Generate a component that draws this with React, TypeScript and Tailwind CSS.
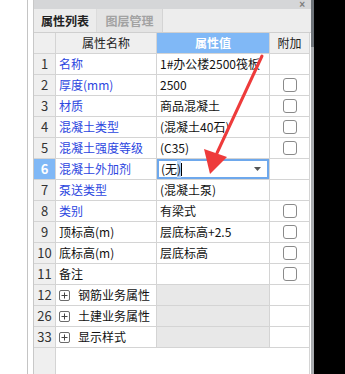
import React from "react";

type Row = {
  idx: string;
  name: string;
  value?: string;
  blue?: boolean;
  check?: boolean;
  group?: boolean;
  active?: boolean;
};

const rows: Row[] = [
  { idx: "1", name: "名称", value: "1#办公楼2500筏板", blue: true },
  { idx: "2", name: "厚度(mm)", value: "2500", blue: true, check: true },
  { idx: "3", name: "材质", value: "商品混凝土", blue: true, check: true },
  { idx: "4", name: "混凝土类型", value: "(混凝土40石)", blue: true, check: true },
  { idx: "5", name: "混凝土强度等级", value: "(C35)", blue: true, check: true },
  { idx: "6", name: "混凝土外加剂", value: "(无)", blue: true, active: true },
  { idx: "7", name: "泵送类型", value: "(混凝土泵)", blue: true },
  { idx: "8", name: "类别", value: "有梁式", blue: true, check: true },
  { idx: "9", name: "顶标高(m)", value: "层底标高+2.5", check: true },
  { idx: "10", name: "底标高(m)", value: "层底标高", check: true },
  { idx: "11", name: "备注", value: "", check: true },
  { idx: "12", name: "钢筋业务属性", group: true },
  { idx: "26", name: "土建业务属性", group: true },
  { idx: "33", name: "显示样式", group: true },
];

const font = { fontFamily: '"Noto Sans CJK SC", "Microsoft YaHei", sans-serif' };

function PlusBox() {
  return (
    <span className="w-[11px] h-[11px] border border-[#6b6b6b] rounded-[2px] flex items-center justify-center mr-[8px] shrink-0">
      <svg width="7" height="7" viewBox="0 0 7 7">
        <path d="M3.5 0.5V6.5M0.5 3.5H6.5" stroke="#444" strokeWidth="1" />
      </svg>
    </span>
  );
}

function CheckBox() {
  return <span className="w-[14px] h-[14px] border border-[#8a8a8a] rounded-[3px] bg-white" />;
}

export default function App() {
  return (
    <div className="w-[345px] h-[374px] flex bg-white overflow-hidden relative" style={font}>
      <div className="w-[28px] h-full border-r border-[#c4c4c4] bg-white shrink-0" />
      <div className="w-[5px] h-full bg-white shrink-0" />
      <div className="w-[278px] h-full flex flex-col border-l border-[#c8c8c8] shrink-0 bg-white">
        <div className="h-[9px] bg-[#d5d6d8] flex justify-end items-center pr-[6px] shrink-0">
          <span className="text-[10px] leading-none text-[#7d7d7d] font-bold" style={{ fontFamily: "Arial, sans-serif" }}>×</span>
        </div>
        <div className="h-[23px] bg-[#ededed] flex shrink-0">
          <div className="w-[63px] h-full flex items-center justify-center bg-[#ececec] border-r border-[#dcdcdc] text-[12px] font-bold text-[#222]">
            属性列表
          </div>
          <div className="w-[66px] h-full flex items-center justify-center bg-[#e4e4e4] border-r border-[#d4d4d4] text-[12px] font-bold text-[#a2a2a2]">
            图层管理
          </div>
        </div>
        <div className="grid grid-cols-[22px_101px_113px_40px] border-t border-[#cfcfcf] text-[12px]">
          <div className="h-[21px] bg-[#efefef] border-r border-b border-[#d4d4d4]" />
          <div className="h-[21px] bg-[#efefef] border-r border-b border-[#d4d4d4] flex items-center justify-center text-[#222]">属性名称</div>
          <div className="h-[21px] bg-[#80b8f6] border-r border-b border-[#d4d4d4] flex items-center justify-center text-white font-bold">属性值</div>
          <div className="h-[21px] bg-[#efefef] border-r border-b border-[#d4d4d4] flex items-center justify-center text-[#222]">附加</div>
          {rows.map((r) => (
            <React.Fragment key={r.idx}>
              <div
                className={
                  r.active
                    ? "h-[21px] bg-[#80b8f6] border-r border-b border-[#d4d4d4] flex items-center justify-center text-white font-bold text-[13px]"
                    : "h-[21px] bg-[#efefef] border-r border-b border-[#d4d4d4] flex items-center justify-center text-[#333] text-[13px]"
                }
              >
                {r.idx}
              </div>
              <div
                className={
                  "h-[21px] border-r border-b border-[#d4d4d4] flex items-center pl-[3px] whitespace-nowrap overflow-hidden " +
                  (r.blue ? "text-[#2c46e0]" : "text-[#111]")
                }
              >
                {r.group && <PlusBox />}
                {r.name}
              </div>
              {r.active ? (
                <div className="h-[21px] border-b border-r border-[#d4d4d4] relative">
                  <div className="absolute inset-0 border-2 border-[#6ea8ec] flex items-center pl-[2px] pr-[6px] bg-white">
                    <span className="text-[#111]">(无</span>
                    <span className="text-[#111] bg-[#b5d2f5]">)</span>
                    <span className="w-[1px] h-[13px] bg-black" />
                    <span className="flex-1" />
                    <svg width="7" height="4" viewBox="0 0 7 4">
                      <path d="M0 0H7L3.5 4Z" fill="#555" />
                    </svg>
                  </div>
                </div>
              ) : (
                <div
                  className={
                    "h-[21px] border-r border-b border-[#d4d4d4] flex items-center pl-[3px] whitespace-nowrap overflow-hidden text-[#111] " +
                    (r.group ? "bg-[#e8e8e8]" : "bg-white")
                  }
                >
                  {r.value}
                </div>
              )}
              <div className="h-[21px] border-r border-b border-[#d4d4d4] flex items-center justify-center">
                {r.check && <CheckBox />}
              </div>
            </React.Fragment>
          ))}
        </div>
        <div className="flex-1 flex">
          <div className="w-[22px] bg-[#efefef] border-r border-[#d4d4d4]" />
          <div className="w-[254px] border-r border-[#d4d4d4]" />
        </div>
      </div>
      <div className="w-[3px] h-full flex flex-col shrink-0">
        <div className="h-[47px] bg-[#6e747a]" />
        <div className="flex-1 bg-[#a9acaf]" />
      </div>
      <div className="flex-1 h-full bg-black" />
      <svg className="absolute left-0 top-0 pointer-events-none" width="345" height="374" viewBox="0 0 345 374">
        <line x1="262" y1="56" x2="217" y2="153" stroke="#ee3b3b" strokeWidth="3" strokeLinecap="round" />
        <polygon points="204,149 227,157 210,174" fill="#ee3b3b" />
      </svg>
    </div>
  );
}
